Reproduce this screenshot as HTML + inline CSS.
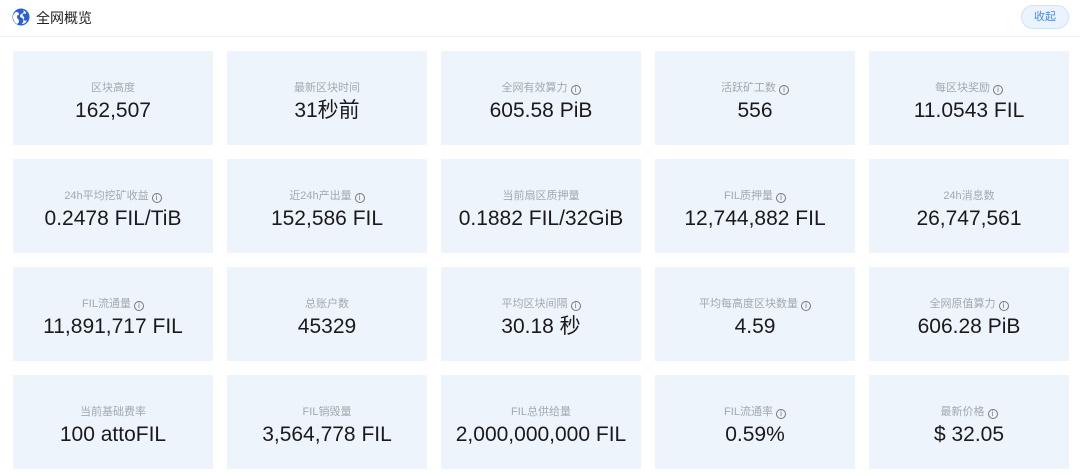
<!DOCTYPE html>
<html><head><meta charset="utf-8"><style>
*{margin:0;padding:0;box-sizing:border-box}
body{width:1080px;height:474px;background:#fff;font-family:"Liberation Sans","Noto Sans CJK SC",sans-serif;overflow:hidden;position:relative}
.hd{position:absolute;left:0;top:0;width:1080px;height:37px;border-bottom:1px solid #edf2f8}
.hd .t{position:absolute;left:36px;top:8px;font-size:14px;color:#222}
.hd svg{position:absolute;left:12px;top:8px}
.btn{position:absolute;left:1021px;top:5px;width:48px;height:24px;border-radius:12px;background:#eaf3ff;border:1px solid #cfe2fb;color:#4a8ae8;font-size:11px;text-align:center;line-height:22px}
.c{position:absolute;width:200px;height:94px;background:#eef4fc;text-align:center}
.l{position:absolute;left:0;right:0;top:30px;font-size:11px;color:#a3a9b1;line-height:14px}
.v{position:absolute;left:0;right:0;top:47px;font-size:21px;color:#1a1a1a;line-height:26px}
.i{display:inline-block;width:10px;height:10px;border:1px solid #777;border-radius:50%;font-size:8px;line-height:8px;color:#777;vertical-align:-1px;margin-left:3px;font-style:normal}
</style></head><body>
<div class="hd"><svg width="18" height="18" viewBox="0 0 18 18"><circle cx="9" cy="9" r="8.5" fill="#2b5fd9"/><path d="M4 4c2 0 3 1 3 2s-2 1-2 3 2 2 2 4-2 3-2 3c-2-1-4-4-4-7 0-2 1-4 3-5zM11 2c2 1 3 2 3 4-1 0-2-1-3 0s0 2 1 3-1 2 0 3 2 1 3 0c-1 3-3 4-5 4 1-2 2-3 1-5s-3-1-3-3 2-2 3-3c1-1 1-2 0-3z" fill="#fff"/></svg><div class="t">全网概览</div></div>
<div class="btn">收起</div>
<div id="g"></div>
<script>
var d=[["区块高度","162,507",0],["最新区块时间","31秒前",0],["全网有效算力","605.58 PiB",1],["活跃矿工数","556",1],["每区块奖励","11.0543 FIL",1],
["24h平均挖矿收益","0.2478 FIL/TiB",1],["近24h产出量","152,586 FIL",1],["当前扇区质押量","0.1882 FIL/32GiB",0],["FIL质押量","12,744,882 FIL",1],["24h消息数","26,747,561",0],
["FIL流通量","11,891,717 FIL",1],["总账户数","45329",0],["平均区块间隔","30.18 秒",1],["平均每高度区块数量","4.59",1],["全网原值算力","606.28 PiB",1],
["当前基础费率","100 attoFIL",0],["FIL销毁量","3,564,778 FIL",0],["FIL总供给量","2,000,000,000 FIL",0],["FIL流通率","0.59%",1],["最新价格","$ 32.05",1]];
var h="";d.forEach(function(e,k){var x=13+(k%5)*214,y=51+Math.floor(k/5)*108;
h+='<div class="c" style="left:'+x+'px;top:'+y+'px"><div class="l">'+e[0]+(e[2]?'<i class="i">i</i>':'')+'</div><div class="v">'+e[1]+'</div></div>';});
document.getElementById("g").innerHTML=h;
</script>
</body></html>
